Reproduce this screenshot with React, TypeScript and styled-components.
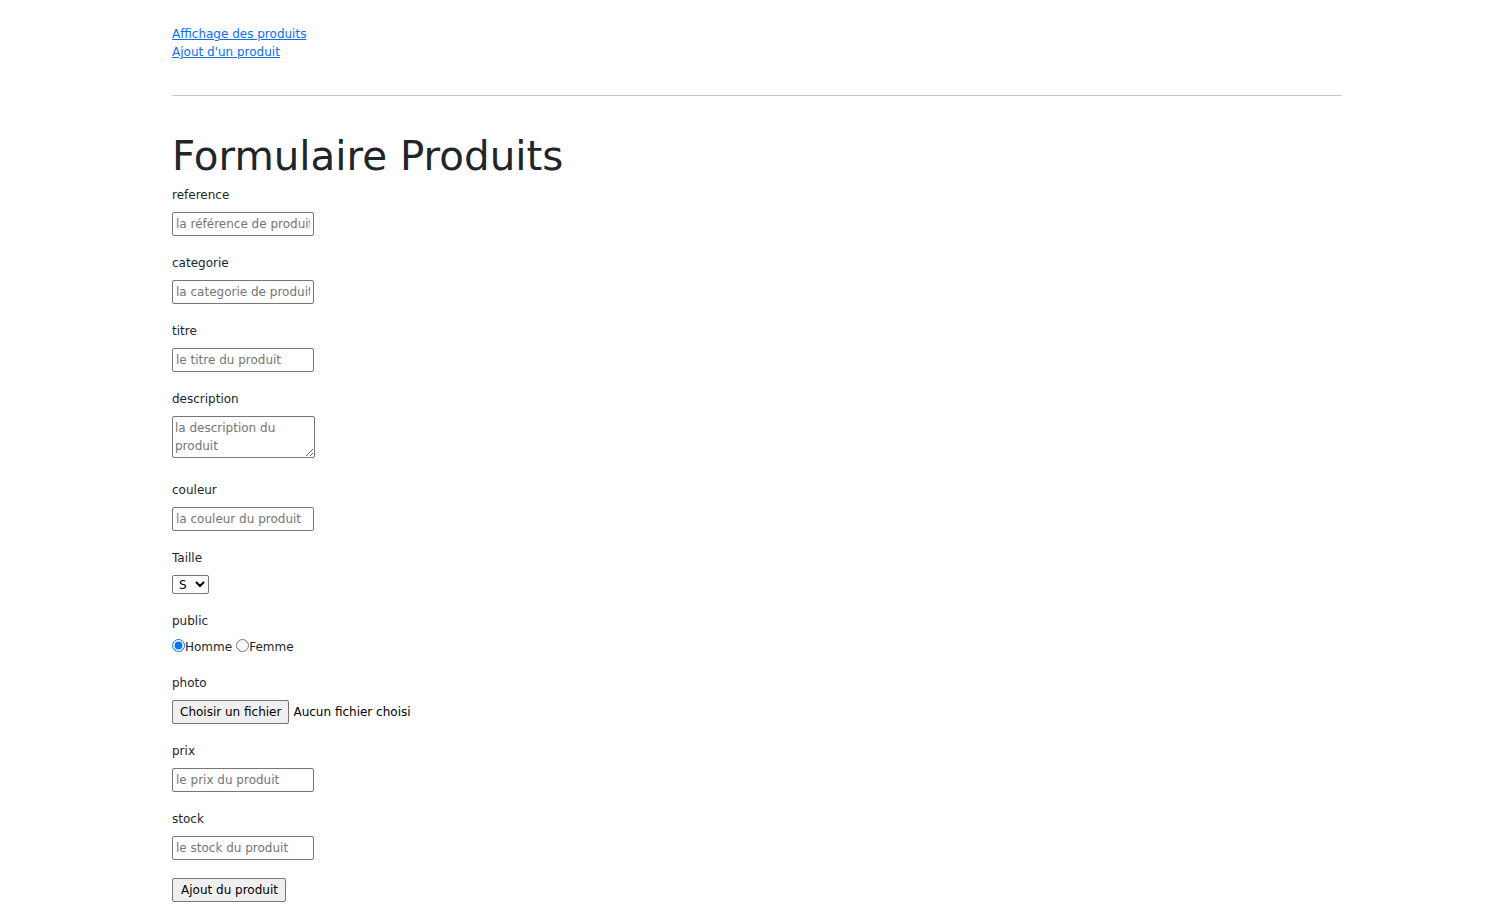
import React from "react";
import styled, { createGlobalStyle } from "styled-components";

const GlobalStyle = createGlobalStyle`
  html, body {
    margin: 0;
    padding: 0;
    background: #fff;
  }
  body {
    font-family: "DejaVu Sans", Verdana, sans-serif;
    font-size: 12px;
    line-height: 1.5;
    color: #212529;
  }
`;

const Page = styled.div`
  width: 1170px;
  padding: 25px 0 20px 172px;
`;

const Nav = styled.nav`
  display: flex;
  flex-direction: column;
  align-items: flex-start;
`;

const NavLink = styled.a`
  color: #0d6efd;
  text-decoration: underline;
  line-height: 18px;
`;

const Divider = styled.hr`
  margin: 34px 0 35px;
  border: 0;
  border-top: 1px solid #c8c9ca;
  height: 0;
`;

const Title = styled.h1`
  margin: 0 0 5px;
  padding-top: 1px;
  font-size: 40.4px;
  font-weight: 400;
  line-height: 48px;
  color: #212529;
`;

const Form = styled.form`
  display: flex;
  flex-direction: column;
  align-items: flex-start;
`;

const Field = styled.div<{ $after?: number }>`
  display: flex;
  flex-direction: column;
  align-items: flex-start;
  margin-bottom: ${(p) => p.$after ?? 17}px;
`;

const Label = styled.label`
  display: block;
  line-height: 18px;
  padding-top: 1px;
  margin-bottom: 8px;
`;

const controlBase = `
  box-sizing: border-box;
  font-family: "DejaVu Sans", Verdana, sans-serif;
  font-size: 12px;
  color: #000;
  background: #fff;
  border: 1px solid #767676;
  border-radius: 2px;
  outline: none;
  &::placeholder {
    color: #757575;
  }
`;

const TextInput = styled.input`
  ${controlBase}
  width: 142px;
  height: 24px;
  padding: 1px 3px;
  margin: 0;
`;

const TextArea = styled.textarea`
  ${controlBase}
  display: block;
  width: 143px;
  height: 42px;
  padding: 2px 2px;
  margin: 0;
  line-height: 18px;
  resize: both;
`;

const Select = styled.select`
  ${controlBase}
  width: 37px;
  height: 19px;
  padding: 0 0 0 2px;
  margin: 0;
  line-height: 17px;
`;

const RadioRow = styled.div`
  display: flex;
  align-items: center;
  height: 18px;
  margin-top: -1px;
`;

const Radio = styled.input`
  width: 13px;
  height: 13px;
  margin: 0 0 1px;
`;

const RadioText = styled.span<{ $gap?: boolean }>`
  margin-right: ${(p) => (p.$gap ? 4 : 0)}px;
  padding-top: 1px;
`;

const FileRow = styled.div`
  display: flex;
  align-items: center;
  gap: 4px;
`;

const GrayButton = styled.button<{ $padLeft?: number }>`
  box-sizing: border-box;
  height: 24px;
  padding: 1px 7px 1px ${(p) => p.$padLeft ?? 7}px;
  margin: 0;
  font-family: "DejaVu Sans", Verdana, sans-serif;
  font-size: 12px;
  color: #000;
  background: #efefef;
  border: 1px solid #767676;
  border-radius: 2px;
  line-height: 18px;
`;

const FileName = styled.span`
  color: #000;
`;

const fields: { name: string; placeholder: string }[] = [
  { name: "reference", placeholder: "la référence de produit" },
  { name: "categorie", placeholder: "la categorie de produit" },
  { name: "titre", placeholder: "le titre du produit" },
];

export default function App() {
  return (
    <>
      <GlobalStyle />
      <Page>
        <Nav>
          <NavLink href="#">Affichage des produits</NavLink>
          <NavLink href="#">Ajout d'un produit</NavLink>
        </Nav>
        <Divider />
        <Title>Formulaire Produits</Title>
        <Form onSubmit={(e) => e.preventDefault()}>
          {fields.map((f) => (
            <Field key={f.name}>
              <Label htmlFor={f.name}>{f.name}</Label>
              <TextInput id={f.name} type="text" placeholder={f.placeholder} />
            </Field>
          ))}
          <Field $after={22}>
            <Label htmlFor="description">description</Label>
            <TextArea id="description" placeholder="la description du produit" />
          </Field>
          <Field>
            <Label htmlFor="couleur">couleur</Label>
            <TextInput id="couleur" type="text" placeholder="la couleur du produit" />
          </Field>
          <Field>
            <Label htmlFor="taille">Taille</Label>
            <Select id="taille" defaultValue="S">
              <option>S</option>
              <option>M</option>
              <option>L</option>
              <option>XL</option>
            </Select>
          </Field>
          <Field $after={18}>
            <Label>public</Label>
            <RadioRow>
              <Radio type="radio" name="public" defaultChecked />
              <RadioText $gap>Homme</RadioText>
              <Radio type="radio" name="public" />
              <RadioText>Femme</RadioText>
            </RadioRow>
          </Field>
          <Field>
            <Label>photo</Label>
            <FileRow>
              <GrayButton type="button">Choisir un fichier</GrayButton>
              <FileName>Aucun fichier choisi</FileName>
            </FileRow>
          </Field>
          <Field>
            <Label htmlFor="prix">prix</Label>
            <TextInput id="prix" type="text" placeholder="le prix du produit" />
          </Field>
          <Field $after={18}>
            <Label htmlFor="stock">stock</Label>
            <TextInput id="stock" type="text" placeholder="le stock du produit" />
          </Field>
          <GrayButton type="submit" $padLeft={8}>
            Ajout du produit
          </GrayButton>
        </Form>
      </Page>
    </>
  );
}
